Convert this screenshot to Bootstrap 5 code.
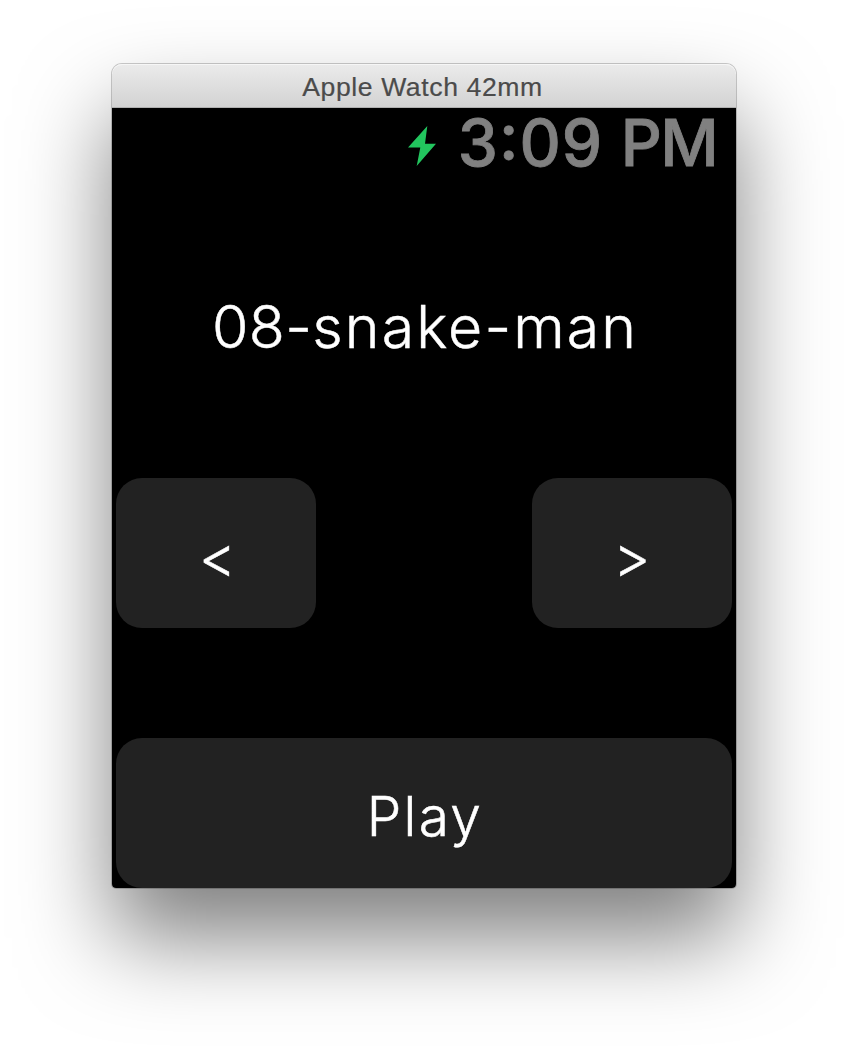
<!DOCTYPE html>
<html lang="en">
<head>
<meta charset="utf-8">
<meta name="viewport" content="width=device-width, initial-scale=1">
<title>Apple Watch 42mm</title>
<link href="https://cdn.jsdelivr.net/npm/bootstrap@5.3.0/dist/css/bootstrap.min.css" rel="stylesheet">
<style>
  body { background: #fff; height: 1048px; overflow: hidden; padding: 64px 112px 0; }
  .sim-window { width: 624px; height: 824px; border-radius: 10px 10px 4px 4px;
    box-shadow: 0 0 0 1px rgba(0,0,0,.2), 0 50px 90px rgba(0,0,0,.5); }
  .titlebar { height: 44px; border-radius: 10px 10px 0 0; background: linear-gradient(#ebebeb, #d2d2d2);
    box-shadow: inset 0 1px 0 #f6f6f6, inset 0 -1px 0 #b0b0b0; padding-right: 3px;
    color: #4b4b4b; font: 26.6px/46px "Liberation Sans", Arial, sans-serif; letter-spacing: .6px; -webkit-text-stroke: .2px #4b4b4b; }
  .screen { height: 780px; background: #000; border-radius: 0 0 4px 4px; font-family: Inter, Roboto, sans-serif; }
  .statusbar { height: 72px; padding-right: 19px; }
  .bolt { margin: 18px 22px 0 0; }
  .clock { color: #808080; font-size: 64px; font-weight: 500; line-height: 70px; letter-spacing: 1.1px; word-spacing: -.7px; font-feature-settings: "case"; -webkit-text-stroke: .8px #808080; }
  .meridiem { letter-spacing: -1.6px; }
  .track { height: 298px; color: #fff; font-size: 59px; font-weight: 300; line-height: 294px; letter-spacing: 1.7px; padding-left: 2px; -webkit-text-stroke: .5px #fff; }
  .digits { letter-spacing: .4px; }
  .tail { letter-spacing: 2.1px; }
  .controls { padding: 0 4px; margin-bottom: 110px; }
  .pad { height: 150px; background: #222; color: #fff; border: 0; border-radius: 26px; font-size: 55px; font-weight: 300; padding: 6px 0 0 2px; line-height: 144px; letter-spacing: 2.3px; -webkit-text-stroke: .5px #fff; }
  .pad:hover { background: #2c2c2c; color: #fff; }
  .pad-step { width: 200px; font-size: 57px; padding-top: 7px; line-height: 143px; }
  .pad-prev { padding-left: 5px; }
</style>
</head>
<body>
<main class="sim-window">
  <header class="titlebar text-center text-nowrap"><span>Apple Watch 42mm</span></header>
  <section class="screen d-flex flex-column">
    <div class="statusbar d-flex justify-content-end align-items-start text-nowrap">
      <svg class="bolt" width="28" height="40" viewBox="0 0 28 40" aria-hidden="true"><path d="M19.3 0 0 21.6H12.3L8.7 40 28 17.7H17Z" fill="#22c55e"/></svg>
      <span class="clock">3:09 <span class="meridiem">PM</span></span>
    </div>
    <div class="track text-center text-nowrap"><span class="digits">08-</span><span class="tail">snake-man</span></div>
    <div class="controls d-flex justify-content-between">
      <button class="btn pad pad-step pad-prev" type="button" aria-label="Previous"><span>&lt;</span></button>
      <button class="btn pad pad-step" type="button" aria-label="Next"><span>&gt;</span></button>
    </div>
    <div class="px-1"><button class="btn pad w-100" type="button"><span class="play-label">Play</span></button></div>
  </section>
</main>
<script src="https://cdn.jsdelivr.net/npm/bootstrap@5.3.0/dist/js/bootstrap.bundle.min.js"></script>
</body>
</html>
